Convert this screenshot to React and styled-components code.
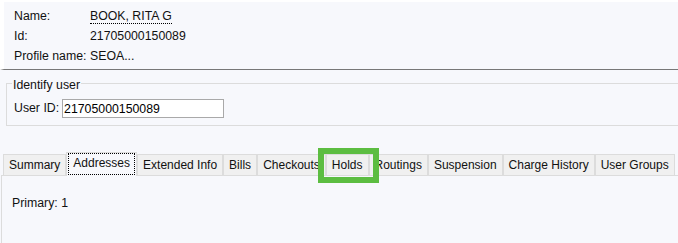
import React from "react";
import styled, { createGlobalStyle } from "styled-components";

const tabs = [
  "Summary",
  "Addresses",
  "Extended Info",
  "Bills",
  "Checkouts",
  "Holds",
  "Routings",
  "Suspension",
  "Charge History",
  "User Groups",
];

export default function App() {
  return (
    <>
      <GlobalStyle />
      <Page>
        <Header>
          <InfoRow>
            <Label>Name:</Label>
            <Value $dotted>BOOK, RITA G</Value>
          </InfoRow>
          <InfoRow>
            <Label>Id:</Label>
            <Value>21705000150089</Value>
          </InfoRow>
          <InfoRow>
            <Label>Profile name:</Label>
            <Value>SEOA...</Value>
          </InfoRow>
        </Header>

        <Group>
          <Legend>Identify user</Legend>
          <Field>
            <FieldLabel htmlFor="user-id">User ID:</FieldLabel>
            <Input id="user-id" defaultValue="21705000150089" />
          </Field>
        </Group>

        <Tabs>
          <TabBar>
            {tabs.map((name) => (
              <Tab
                key={name}
                $active={name === "Addresses"}
                $highlighted={name === "Holds"}
              >
                {name === "Addresses" ? <FocusLabel>{name}</FocusLabel> : name}
              </Tab>
            ))}
          </TabBar>
          <TabPanel>
            <PanelText>Primary: 1</PanelText>
          </TabPanel>
        </Tabs>
      </Page>
    </>
  );
}

const GlobalStyle = createGlobalStyle`
  html, body {
    margin: 0;
    padding: 0;
    background: #f7f8fc;
  }
  body {
    font-family: "Liberation Sans", Arial, sans-serif;
    font-size: 12.3px;
    color: #111111;
  }
`;

const Page = styled.div`
  width: 678px;
  height: 243px;
  overflow: hidden;
  display: flex;
  flex-direction: column;
  background: #f7f8fc;
`;

const Header = styled.div`
  border-top: 2px solid #ffffff;
  border-left: 4px solid #ffffff;
  border-bottom: 1px solid #777777;
  padding: 4px 0 3px 10px;
`;

const InfoRow = styled.div`
  display: flex;
  height: 20px;
  line-height: 20px;
`;

const Label = styled.span`
  width: 76px;
  flex: none;
`;

const Value = styled.span`
  align-self: center;
  line-height: 14px;
  border-bottom: ${(p) => (p.$dotted ? "1px dotted #000000" : "none")};
`;

const Group = styled.fieldset`
  margin: 4px 0 0 6px;
  padding: 7px 0 7px 7px;
  border: 1px solid #dcdcdc;
  border-right: none;
  min-width: 0;
`;

const Legend = styled.legend`
  margin-left: -2px;
  padding: 4px 1px 0;
  line-height: 14px;
`;

const Field = styled.div`
  display: flex;
  align-items: center;
  gap: 3px;
`;

const FieldLabel = styled.label`
  line-height: 19px;
`;

const Input = styled.input`
  box-sizing: border-box;
  width: 162px;
  height: 19px;
  margin: 0;
  padding: 0 1px;
  border: 1px solid #a9a9a9;
  background: #ffffff;
  font: inherit;
  color: #000000;
  outline: none;
`;

const Tabs = styled.div`
  margin: 26px 0 0 1px;
  flex: 1;
  display: flex;
  flex-direction: column;
`;

const TabBar = styled.div`
  display: flex;
  align-items: flex-end;
  padding-left: 2px;
  border-bottom: 1px solid #dcdcdc;
  font-size: 12px;
`;

const Tab = styled.div`
  position: relative;
  box-sizing: border-box;
  flex: none;
  height: ${(p) => (p.$active ? "24px" : "21px")};
  margin-bottom: ${(p) => (p.$active ? "-1px" : "0")};
  padding: ${(p) => (p.$active ? "0 1px" : "0 5px")};
  border: 1px solid #dcdcdc;
  border-bottom: none;
  background: ${(p) => (p.$active ? "#f7f8fc" : "#f0f0f0")};
  line-height: 21px;
  white-space: nowrap;
  z-index: ${(p) => (p.$highlighted ? 2 : p.$active ? 1 : 0)};

  &::after {
    content: "";
    display: ${(p) => (p.$highlighted ? "block" : "none")};
    position: absolute;
    left: -9px;
    right: -11px;
    top: -7px;
    bottom: -8px;
    border: 6px solid #5cbd41;
    pointer-events: none;
  }
`;

const FocusLabel = styled.span`
  display: block;
  padding: 0 4px 2px;
  line-height: 18px;
  border: 1px dotted #000000;
`;

const TabPanel = styled.div`
  flex: 1;
  border-left: 1px solid #dcdcdc;
  padding: 17px 0 0 10px;
`;

const PanelText = styled.div`
  line-height: 20px;
`;
